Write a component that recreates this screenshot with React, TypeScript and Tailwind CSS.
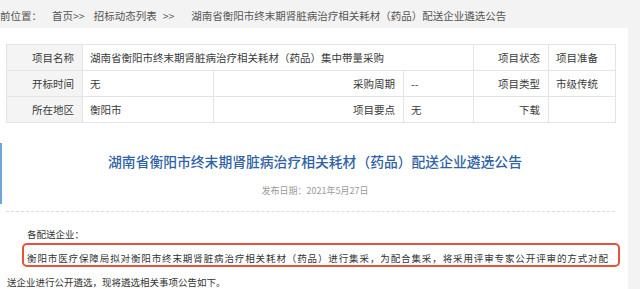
const cjk = { fontFamily: '"Noto Sans CJK SC", "Liberation Sans", sans-serif' };

type Cell = { text: string; label?: boolean; span?: number; grayBg?: boolean };

const rows: Cell[][] = [
  [
    { text: "项目名称", label: true, grayBg: true },
    { text: "湖南省衡阳市终末期肾脏病治疗相关耗材（药品）集中带量采购", span: 3 },
    { text: "项目状态", label: true },
    { text: "项目准备" },
  ],
  [
    { text: "开标时间", label: true, grayBg: true },
    { text: "无" },
    { text: "采购周期", label: true },
    { text: "--" },
    { text: "项目类型", label: true },
    { text: "市级传统" },
  ],
  [
    { text: "所在地区", label: true, grayBg: true },
    { text: "衡阳市" },
    { text: "项目要点", label: true },
    { text: "无" },
    { text: "下载", label: true },
    { text: "" },
  ],
];

function InfoTable() {
  return (
    <table className="ml-[6px] w-[609px] table-fixed border-collapse text-[10.5px] text-[#3a3a3a]">
      <colgroup>
        <col className="w-[76px]" />
        <col className="w-[131px]" />
        <col className="w-[190px]" />
        <col className="w-[70px]" />
        <col className="w-[75px]" />
        <col className="w-[67px]" />
      </colgroup>
      <tbody>
        {rows.map((row, i) => (
          <tr key={i} className="h-[26px]">
            {row.map((c, j) => (
              <td
                key={j}
                colSpan={c.span}
                className={
                  "border border-[#e4e4e4] whitespace-nowrap p-0 " +
                  (c.label ? "pr-[8px] text-right " : "pl-[7px] text-left ") +
                  (c.grayBg ? "bg-[#f4f4f4]" : "bg-white")
                }
              >
                {c.text}
              </td>
            ))}
          </tr>
        ))}
      </tbody>
    </table>
  );
}

export default function App() {
  return (
    <div className="relative h-[289px] w-[640px] overflow-hidden bg-[#f3f3f3]" style={cjk}>
      {/* breadcrumb, scrolled so the first glyph sits off the left edge */}
      <div className="flex h-[28px] items-center overflow-hidden whitespace-nowrap pt-[4px] text-[10.5px] text-[#555]">
        <span className="-ml-[10.5px]">当前位置：</span>
        <span className="ml-[10px]">首页&gt;&gt;</span>
        <span className="ml-[9px]">招标动态列表</span>
        <span className="ml-[6px]">&gt;&gt;</span>
        <span className="ml-[17px]">湖南省衡阳市终末期肾脏病治疗相关耗材（药品）配送企业遴选公告</span>
      </div>

      <div className="flex">
        <div className="h-[261px] w-[628px] bg-white pt-[16px]">
          <InfoTable />

          {/* title block */}
          <div className="mt-[20px] h-[61px] border-l-2 border-[#6ea6dc] pt-[8px] text-center">
            <div className="text-[13.8px] font-medium leading-[20px] text-[#2f63a6]">
              湖南省衡阳市终末期肾脏病治疗相关耗材（药品）配送企业遴选公告
            </div>
            <div className="mt-[14px] text-[9px] leading-[12px] text-[#9a9a9a]">发布日期：2021年5月27日</div>
          </div>

          <div className="ml-[6px] mt-[7px] w-[609px] border-t border-dashed border-[#dcdcdc]" />

          {/* body */}
          <div className="mt-[10px] text-[9.5px] leading-[24px] text-[#333]">
            <div className="pl-[27px]">各配送企业：</div>
            <div className="ml-[27px] w-[581px] whitespace-nowrap text-justify [text-align-last:justify]">
              衡阳市医疗保障局拟对衡阳市终末期肾脏病治疗相关耗材（药品）进行集采，为配合集采，将采用评审专家公开评审的方式对配
            </div>
            <div className="pl-[7px]">送企业进行公开遴选，现将遴选相关事项公告如下。</div>
          </div>
        </div>
        <div className="flex-1" />
      </div>

      {/* red highlight annotation */}
      <div className="absolute left-[22px] top-[243px] h-[24px] w-[598px] rounded-[5px] border-2 border-[#e5533b]" />
    </div>
  );
}
